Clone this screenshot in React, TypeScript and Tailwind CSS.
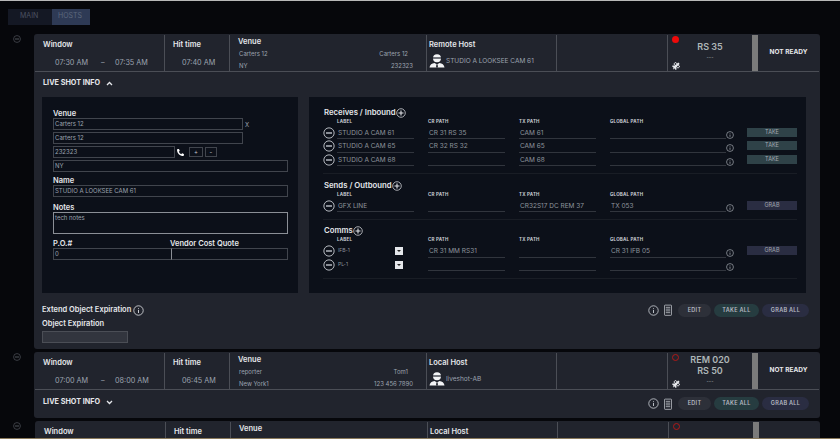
import React from 'react';
import { FaPhone, FaSatellite } from 'react-icons/fa';

const font = { fontFamily: 'Inter, "Liberation Sans", sans-serif' };

const CircleIcon = ({ kind, size = 14, className = '' }: { kind: 'plus' | 'minus' | 'info'; size?: number; className?: string }) => (
  <svg width={size} height={size} viewBox="0 0 14 14" fill="none" stroke="currentColor" className={`shrink-0 ${className}`}>
    <circle cx="7" cy="7" r="6" strokeWidth="1" />
    {kind === 'info' ? (
      <path d="M7 6.2v4M7 3.8v1" strokeWidth="1.1" />
    ) : (
      <path d={kind === 'plus' ? 'M3.5 7h7M7 3.5v7' : 'M3.5 7h7'} strokeWidth="1.5" />
    )}
  </svg>
);

const HostIcon = () => (
  <svg width="16" height="14" viewBox="0 0 16 14" className="shrink-0" fill="#f3f4f6">
    <circle cx="8" cy="4.2" r="4" />
    <rect x="3.6" y="3.4" width="8.8" height="1.2" fill="#21242d" />
    <path d="M0.5 13.5c.3-3 2.4-4.3 5-4.6L8 10.5l2.500-1.600c2.600.3 4.700 1.600 5 4.600z" />
    <path d="M7.400 10.500h1.200l.4 3H7z" fill="#21242d" />
  </svg>
);

const DocIcon = () => (
  <svg width="8" height="12" viewBox="0 0 9 13" fill="none" stroke="#d1d5db" strokeWidth="0.8" className="shrink-0">
    <rect x="0.5" y="1" width="8" height="11.500" rx="0.8" />
    <path d="M2 3.500h5M2 5.500h5M2 7.500h5M2 9.500h5" />
  </svg>
);

const Chevron = ({ up }: { up: boolean }) => (
  <svg width="7" height="5" viewBox="0 0 7 5" fill="none" stroke="#e5e7eb" strokeWidth="1.300">
    <path d={up ? 'M1 4l2.500-2.500L6 4' : 'M1 1l2.500 2.500L6 1'} />
  </svg>
);

const PillButtons = ({ className = '' }: { className?: string }) => (
  <div className={`flex items-center ${className}`}>
    <CircleIcon kind="info" size={11} className="text-[#d1d5db]" />
    <div className="ml-[5px] mr-[6px]"><DocIcon /></div>
    <button className="w-[33px] h-[13px] rounded-full bg-[#2d3039] text-[5.500px] font-semibold tracking-[0.3px] text-[#b6bac2]">EDIT</button>
    <button className="ml-[3px] w-[45px] h-[13px] rounded-full bg-[#263c40] text-[5.500px] font-semibold tracking-[0.3px] text-[#b6bac2]">TAKE ALL</button>
    <button className="ml-[3px] w-[47px] h-[13px] rounded-full bg-[#2a2d42] text-[5.500px] font-semibold tracking-[0.3px] text-[#b6bac2]">GRAB ALL</button>
  </div>
);

interface HeaderProps {
  start?: string;
  end?: string;
  hit?: string;
  venueA?: string;
  venueB?: string;
  venueC?: string;
  venueD?: string;
  hostTitle: string;
  host?: string;
  statusTop?: string;
  status?: string;
  live?: boolean;
}

const CardHeader = ({ start, end, hit, venueA, venueB, venueC, venueD, hostTitle, host, statusTop, status, live }: HeaderProps) => (
  <div className="flex h-[37px] mx-[1px] shrink-0 border-b border-[#4b4e56] text-[#9ca3af]">
    <div className="w-[130px] shrink-0 border-r border-[#4b4e56] pl-[8px] pt-[4px]">
      <div className="text-[7.500px] leading-[12px] font-semibold text-[#e5e7eb]">Window</div>
      <div className="flex mt-[6px] pl-[12px] text-[7.250px] leading-[11px]">
        <span className="w-[46px]">{start}</span>
        <span className="w-[14px]">{start ? '–' : ''}</span>
        <span>{end}</span>
      </div>
    </div>
    <div className="w-[65px] shrink-0 border-r border-[#4b4e56] pl-[8px] pt-[4px]">
      <div className="text-[7.500px] leading-[12px] font-semibold text-[#e5e7eb]">Hit time</div>
      <div className="mt-[6px] pl-[9px] text-[7.250px] leading-[11px]">{hit}</div>
    </div>
    <div className="w-[197px] shrink-0 border-r border-[#4b4e56] pl-[8px] pr-[13px] pt-[1px]">
      <div className="text-[7.500px] leading-[12px] font-semibold text-[#e5e7eb]">Venue</div>
      <div className="flex justify-between pl-[1px] pr-[5px] text-[6px] leading-[12px]">
        <span>{venueA}</span>
        <span>{venueB}</span>
      </div>
      <div className="flex justify-between pl-[1px] text-[6px] leading-[12px]">
        <span>{venueC}</span>
        <span>{venueD}</span>
      </div>
    </div>
    <div className="w-[130px] shrink-0 border-r border-[#4b4e56] pl-[2px] pt-[4px]">
      <div className="text-[7.500px] leading-[12px] font-semibold text-[#e5e7eb]">{hostTitle}</div>
      <div className="flex items-center gap-[1px] mt-[3px] text-[6.500px] leading-[14px]">
        <HostIcon />
        <span>{host}</span>
      </div>
    </div>
    <div className="w-[111px] shrink-0 border-r border-[#4b4e56]" />
    <div className="relative w-[84px] shrink-0 flex flex-col items-center justify-center pb-[3px] text-[#aeb6b8]">
      <span className={`absolute left-[4px] top-[1px] w-[7px] h-[7px] rounded-full ${live ? 'bg-[#ee0a0a]' : 'border border-[#b01818]'}`} />
      {statusTop && <div className="text-[9px] leading-[11px] font-semibold">{statusTop}</div>}
      {status && <div className="text-[9px] leading-[11px] font-semibold">{status}</div>}
      {status && <div className="text-[5px] leading-[10px]">---</div>}
      {status && <FaSatellite className="absolute left-[4px] bottom-[1px] text-[#e5e7eb]" size={8} />}
    </div>
    <div className="w-[6px] shrink-0 bg-[#7b7b7b]" />
    <div className="flex-1 flex items-center justify-center text-[6.500px] font-bold text-[#e5e7eb]">{status ? 'NOT READY' : ''}</div>
  </div>
);

const Field = ({ value, className = '' }: { value?: string; className?: string }) => (
  <div className={`h-[12px] border border-[#41454d] px-[1px] text-[6px] leading-[10px] text-[#9ca3af] ${className}`}>{value}</div>
);

const FieldLabel = ({ children, className = '' }: { children: React.ReactNode; className?: string }) => (
  <div className={`text-[7.500px] leading-[9px] font-semibold text-[#e5e7eb] ${className}`}>{children}</div>
);

const VenuePanel = () => (
  <div className="w-[256px] shrink-0 bg-[#0c1019] pl-[11px] pr-[10px] pt-[12px]">
    <FieldLabel>Venue</FieldLabel>
    <div className="flex items-center text-[#9ca3af] text-[6px]">
      <Field value="Carters 12" className="w-[190px]" />
      <span className="ml-[2px]">X</span>
    </div>
    <Field value="Carters 12" className="w-[190px] mt-[2px]" />
    <div className="flex items-center mt-[2px]">
      <Field value="232323" className="w-[122px]" />
      <FaPhone size={7} className="ml-[2px] text-white -scale-x-100" />
      <span className="ml-[5px] w-[14px] h-[10px] border border-[#41454d] text-[6px] leading-[8px] text-center text-[#c4c8cf]">+</span>
      <span className="ml-[2px] w-[12px] h-[10px] border border-[#41454d] text-[6px] leading-[8px] text-center text-[#c4c8cf]">-</span>
    </div>
    <Field value="NY" className="mt-[2px]" />
    <FieldLabel className="mt-[4px]">Name</FieldLabel>
    <Field value="STUDIO A LOOKSEE CAM 61" />
    <FieldLabel className="mt-[6px]">Notes</FieldLabel>
    <div className="h-[22px] border border-[#8b8f96] px-[1px] text-[6px] leading-[9px] text-[#9ca3af] bg-[#0c1019]">tech notes</div>
    <div className="flex mt-[5px]">
      <FieldLabel className="w-[117px]">P.O.#</FieldLabel>
      <FieldLabel>Vendor Cost Quote</FieldLabel>
    </div>
    <div className="flex">
      <Field value="0" className="w-[118px] border-r-0" />
      <Field className="flex-1 border-l-[#8b8f96]" />
    </div>
  </div>
);

const ColumnHeads = () => (
  <div className="flex h-[6px] text-[4.500px] leading-[6px] font-bold tracking-[0.2px] text-[#c9ccd2]">
    <span className="ml-[14px] w-[77px]">LABEL</span>
    <span className="ml-[14px] w-[77px]">CR PATH</span>
    <span className="ml-[14px] w-[77px]">TX PATH</span>
    <span className="ml-[14px]">GLOBAL PATH</span>
  </div>
);

const PathCell = ({ value, width = 'w-[77px]' }: { value?: string; width?: string }) => (
  <div className={`${width} ml-[14px] h-[13.500px] border-b border-[#31353d] pl-[1px] text-[6.500px] leading-[15px] text-[#8f959d] truncate`}>{value}</div>
);

interface RowProps {
  label: string;
  cr?: string;
  tx?: string;
  global?: string;
  action?: string;
  comms?: boolean;
}

const PathRow = ({ label, cr, tx, global, action, comms }: RowProps) => (
  <div className="flex items-start h-[13.500px]">
    <CircleIcon kind="minus" size={12} className="w-[12px] mr-[2px] mt-[1px] text-[#d1d5db]" />
    {comms ? (
      <div className="w-[77px] flex items-center justify-between h-[14px] pl-[1px] pr-[11px] text-[5px] text-[#8f959d]">
        <span>{label}</span>
        <span className="w-[8px] h-[8px] bg-[#e5e7eb] flex items-center justify-center">
          <span className="border-x-[2px] border-t-[2px] border-x-transparent border-t-[#222]" />
        </span>
      </div>
    ) : (
      <div className="w-[77px] h-[13.500px] border-b border-[#31353d] pl-[1px] text-[6.500px] leading-[15px] text-[#8f959d]">{label}</div>
    )}
    <PathCell value={cr} />
    <PathCell value={tx} />
    <PathCell value={global} width="w-[116px]" />
    <CircleIcon kind="info" size={8} className="mt-[5px] text-[#c4c8cf]" />
    {action && (
      <button className={`ml-[13px] mt-[2px] w-[50px] h-[9px] text-[5.500px] leading-[9px] text-[#a3a9b0] ${action === 'TAKE' ? 'bg-[#2f4248]' : 'bg-[#2a2d42]'}`}>{action}</button>
    )}
  </div>
);

const Section = ({ title, children, className = '' }: { title: string; children: React.ReactNode; className?: string }) => (
  <div className={`border-b border-[#191d25] pb-[7px] ${className}`}>
    <div className="flex items-center h-[12px] pl-[1px] text-[7.750px] font-semibold text-[#e5e7eb]">
      {title}
      <CircleIcon kind="plus" size={10} />
    </div>
    <ColumnHeads />
    <div className="mt-[1px]">{children}</div>
  </div>
);

const PathsPanel = () => (
  <div className="flex-1 ml-[11px] bg-[#0c1019] pl-[14px] pr-[9px] pt-[9.500px]">
    <Section title="Receives / Inbound">
      <PathRow label="STUDIO A CAM 61" cr="CR 31 RS 35" tx="CAM 61" action="TAKE" />
      <PathRow label="STUDIO A CAM 65" cr="CR 32 RS 32" tx="CAM 65" action="TAKE" />
      <PathRow label="STUDIO A CAM 68" tx="CAM 68" action="TAKE" />
    </Section>
    <Section title="Sends / Outbound" className="pt-[5.500px]">
      <PathRow label="GFX LINE" tx="CR32S17 DC REM 37" global="TX 053" action="GRAB" />
    </Section>
    <Section title="Comms" className="pt-[5px]">
      <PathRow comms label="IFB-1" cr="CR 31 MM RS31" global="CR 31 IFB 05" action="GRAB" />
      <PathRow comms label="PL-1" />
    </Section>
  </div>
);

const InfoTitle = ({ up }: { up: boolean }) => (
  <div className="flex items-center gap-[6px] text-[7.250px] font-bold text-[#e5e7eb]">
    LIVE SHOT INFO
    <Chevron up={up} />
  </div>
);

const Gutter = () => (
  <div className="flex justify-center pt-[1px] w-[34px] shrink-0 text-[#5f636b]">
    <CircleIcon kind="minus" size={8} />
  </div>
);

export default function App() {
  return (
    <div style={font} className="w-[840px] h-[439px] overflow-hidden flex flex-col bg-[#06070b]">
      <div className="h-[1px] shrink-0 bg-[#b8b8b8]" />
      <div className="flex-1 min-h-0 overflow-hidden pt-[8px]">
        {/* Tabs */}
        <div className="flex h-[16px] ml-[8px] text-[7px] leading-[14px]">
          <div className="w-[44px] bg-[#141824] pl-[12px] text-[#4b5161]">MAIN</div>
          <div className="w-[38px] bg-[#2e3a55] pl-[6px] text-[#5d687d]">HOSTS</div>
        </div>

        <div className="mt-[9px] pr-[20px] flex flex-col gap-[3px]">
          {/* First card, expanded */}
          <div className="flex h-[315px]">
            <Gutter />
            <div className="flex-1 rounded-[3px] bg-[#21242d] pt-[1px] flex flex-col">
              <CardHeader
                start="07:30 AM"
                end="07:35 AM"
                hit="07:40 AM"
                venueA="Carters 12"
                venueB="Carters 12"
                venueC="NY"
                venueD="232323"
                hostTitle="Remote Host"
                host="STUDIO A LOOKSEE CAM 61"
                status="RS 35"
                live
              />
              <div className="pl-[9px] h-[25px] pb-[2px] flex items-center"><InfoTitle up /></div>
              <div className="flex h-[196px] mx-[8px] mr-[14px]">
                <VenuePanel />
                <PathsPanel />
              </div>
              <div className="flex justify-between pl-[8px] pr-[11px] pt-[10px]">
                <div>
                  <div className="flex items-center gap-[1px] text-[7.500px] leading-[14px] font-semibold text-[#e5e7eb]">
                    Extend Object Expiration
                    <CircleIcon kind="info" size={11} className="ml-[1px]" />
                  </div>
                  <div className="text-[7.500px] leading-[9px] mt-[2px] font-semibold text-[#e5e7eb]">Object Expiration</div>
                  <div className="mt-[3px] w-[86px] h-[12px] bg-[#32353e] border border-[#4b4e56]" />
                </div>
                <PillButtons className="self-start h-[14px]" />
              </div>
            </div>
          </div>

          {/* Second card, collapsed */}
          <div className="flex h-[66px]">
            <Gutter />
            <div className="flex-1 rounded-[3px] bg-[#21242d] pt-[1px] flex flex-col">
              <CardHeader
                start="07:00 AM"
                end="08:00 AM"
                hit="06:45 AM"
                venueA="reporter"
                venueB="Tom1"
                venueC="New York1"
                venueD="123 456 7890"
                hostTitle="Local Host"
                host="liveshot-AB"
                statusTop="REM 020"
                status="RS 50"
              />
              <div className="flex items-center justify-between h-[24px] pl-[9px] pr-[11px]">
                <InfoTitle up={false} />
                <PillButtons className="mt-[3px]" />
              </div>
            </div>
          </div>

          {/* Third card, cut off by the window */}
          <div className="flex h-[66px]">
            <Gutter />
            <div className="flex-1 ml-[1px] rounded-[3px] bg-[#21242d] pt-[1px] flex flex-col">
              <CardHeader hostTitle="Local Host" />
            </div>
          </div>
        </div>
      </div>
      <div className="h-[1px] shrink-0 bg-[#8a7a5c]" />
    </div>
  );
}
